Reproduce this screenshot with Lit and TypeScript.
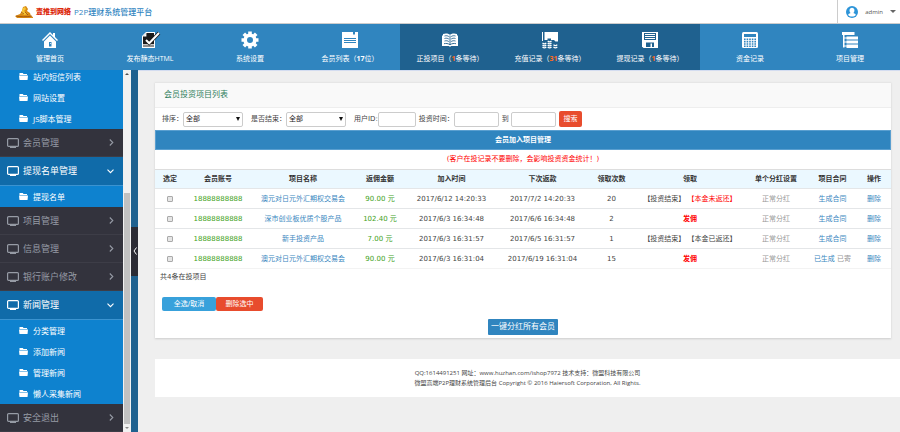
import { LitElement, html, css, svg, nothing } from "lit";
import { customElement, property } from "lit/decorators.js";
import { classMap } from "lit/directives/class-map.js";

const navIcons: Record<string, unknown> = {
  home: svg`<path fill="#fff" d="M8 0 11 3V1h2v4l3 3-1 1-7-7-7 7-1-1zM8 3.4l6 6V16H2V9.400z"/><path fill="#3085bf" d="M7 10h2.500v4.500H7z"/><path fill="#fff" d="M8 11h.8v1H8z"/>`,
  publish: svg`<path fill="#fff" d="M4 0h9v16H0V4z"/><path fill="#1b1b1b" d="M4.600 1H12v11H1V4.600z"/><path fill="#8f8f8f" d="M1 12.500h11V15H1z"/><path fill="#fff" d="M1 4.400 4.400 1v3.400z"/><path d="M4 8l3.200 3.200L17 1" fill="none" stroke="#1b1b1b" stroke-width="3.600"/><path d="M4 8l3.200 3.200L17 1" fill="none" stroke="#fff" stroke-width="2"/>`,
  gear: svg`<circle cx="8" cy="8" r="4.800" fill="none" stroke="#fff" stroke-width="3.600"/><path stroke="#fff" stroke-width="3.600" d="M8-.5v3M8 13.500v3M-.5 8h3M13.500 8h3M1.800 1.800l2 2M12.200 12.200l2 2M1.800 14.200l2-2M12.200 3.800l2-2"/>`,
  note: svg`<path fill="#fff" d="M0 0h11v2.500h2V0h3v16H0z"/><path stroke="#3085bf" d="M2 6.500h12M2 8.500h12M2 10.500h12"/>`,
  book: svg`<path fill="#fff" d="M1 2c3-1 5-.5 7 .8C10 1.500 12 1 15 2v1.500h1V14H9L8 15l-1-1H0V3.500h1z"/><path fill="none" stroke="#1f618f" stroke-width=".9" d="M8 3.500V13M2.500 4c1.500-.5 3-.3 4.300.5M2.500 6.500c1.500-.5 3-.3 4.300.5M2.500 9c1.500-.5 3-.3 4.300.5M13.500 4c-1.500-.5-3-.3-4.300.5M13.500 6.500c-1.500-.5-3-.3-4.300.5M13.500 9c-1.500-.5-3-.3-4.300.5M2 11.700c2-.5 4-.3 6 1 2-1.300 4-1.500 6-1"/>`,
  coins: svg`<path fill="#fff" d="M0 0h1v9H0zM2.500 0H16v9.500h-2.500L12 8H9V6.500H5.500V8H2.500z"/><g fill="none" stroke="#fff" stroke-width="1.200"><path d="M.5 11c1.200 1 2.600 1 3.800 0M.5 13c1.200 1 2.600 1 3.800 0M.5 15c1.200 1 2.600 1 3.800 0M5.700 9c1.200 1 2.600 1 3.800 0M5.700 11c1.200 1 2.600 1 3.800 0M5.700 13c1.200 1 2.600 1 3.800 0M5.700 15c1.200 1 2.600 1 3.800 0M11.500 12.800c1.200 1 2.600 1 3.800 0M11.500 15c1.200 1 2.600 1 3.800 0"/></g>`,
  disk: svg`<path fill="#fff" d="M0 0h16v16H1.500L0 14.500z"/><path fill="#1f618f" d="M2 1h12v7H2zM4 10.500h8V15H4z"/><path stroke="#fff" d="M3 2.500h10M3 4.500h10M3 6.500h10"/><path fill="#fff" d="M8.500 11.500H10V15H8.500z"/>`,
  calc: svg`<path fill="#fff" d="M1.500 0h13Q16 0 16 1.500v13q0 1.500-1.500 1.500h-13Q0 16 0 14.500v-13Q0 0 1.500 0z"/><path fill="#3085bf" d="M2 2h12v3H2z"/><path stroke="#3085bf" stroke-width="1.600" stroke-dasharray="1.600 1" d="M2 7.200h12.400M2 9.600h12.400M2 12h12.400M2 14.200h12.400"/>`,
  tree: svg`<path fill="#fff" d="M0 0h12.500v3H0zM1 3h1.500v12.500H1zM4.500 4.500H16v3H4.500zM4.500 8.500H16v3H4.500zM4.500 12.500H16v3.500H4.500z"/><path stroke="#fff" d="M2 6h3M2 10h3M2 14h3"/>`,
};

interface NavItem { icon: string; label: string; count?: string; tail?: string; dark?: boolean }
const navItems: NavItem[] = [
  { icon: "home", label: "管理首页" },
  { icon: "publish", label: "发布静态HTML" },
  { icon: "gear", label: "系统设置" },
  { icon: "note", label: "会员列表（", count: "17", tail: "位）" },
  { icon: "book", label: "正投项目（", count: "1", tail: "条等待）", dark: true },
  { icon: "coins", label: "充值记录（", count: "31", tail: "条等待）", dark: true },
  { icon: "disk", label: "提现记录（", count: "1", tail: "条等待）", dark: true },
  { icon: "calc", label: "资金记录" },
  { icon: "tree", label: "项目管理" },
];

interface Section { title?: string; children?: string[] }
const sections: Section[] = [
  { children: ["站内短信列表", "网站设置", "JS脚本管理"] },
  { title: "会员管理" },
  { title: "提现名单管理", children: ["提现名单"] },
  { title: "项目管理" },
  { title: "信息管理" },
  { title: "银行账户修改" },
  { title: "新闻管理", children: ["分类管理", "添加新闻", "管理新闻", "懒人采集新闻"] },
  { title: "安全退出" },
];

interface Row {
  account: string; project: string; amount: string; joined: string; next: string;
  times: number; done?: string; unpaid?: boolean; contract: string; sent?: string;
}
const rows: Row[] = [
  { account: "18888888888", project: "澳元对日元外汇期权交易会", amount: "90.00", joined: "2017/6/12 14:20:33", next: "2017/7/2 14:20:33", times: 20, done: "【本金未返还】", unpaid: true, contract: "生成合同" },
  { account: "18888888888", project: "深市创业板优质个股产品", amount: "102.40", joined: "2017/6/3 16:34:48", next: "2017/6/6 16:34:48", times: 2, contract: "生成合同" },
  { account: "18888888888", project: "新手投资产品", amount: "7.00", joined: "2017/6/3 16:31:57", next: "2017/6/5 16:31:57", times: 1, done: "【本金已返还】", contract: "生成合同" },
  { account: "18888888888", project: "澳元对日元外汇期权交易会", amount: "90.00", joined: "2017/6/3 16:31:04", next: "2017/6/19 16:31:04", times: 15, contract: "已生成", sent: "已寄" },
];

const columns: [string, number][] = [
  ["选定", 30], ["会员账号", 66], ["项目名称", 104], ["返佣金额", 50], ["加入时间", 93], ["下次返款", 89],
  ["领取次数", 49], ["领取", 108], ["单个分红设置", 64], ["项目合同", 49], ["操作", 34],
];
const totalWidth = columns.reduce((sum, [, w]) => sum + w, 0);

const base = css`
  * { box-sizing: border-box; }
  a { color: inherit; text-decoration: none; }
  svg { display: block; flex: none; }
  button, input, select { font: inherit; margin: 0; }
`;

@customElement("app-header")
class AppHeader extends LitElement {
  static styles = [base, css`
    :host { display: block; }
    .top { display: flex; justify-content: space-between; height: 24px; background: #fff; border-bottom: 1px solid #ccc; }
    .brand { display: flex; align-items: center; gap: 3px; padding-left: 15px; }
    .mark { color: #dc2a0d; font-weight: 900; font-size: 7px; }
    .name { color: #3085bf; font-size: 8px; font-weight: 500; }
    .user { display: flex; align-items: center; gap: 7px; padding: 0 4px 0 8px; border: 0; border-left: 1px solid #ccc; background: none; color: #555; font-size: 6px; }
    .nav { display: grid; grid-template-columns: repeat(9, 1fr); background: #3085bf; }
    .item { display: flex; flex-direction: column; align-items: center; gap: 6px; height: 46px; padding-top: 8px; color: #fff; font-size: 7px; line-height: 10px; white-space: nowrap; }
    .dark { background: #1f618f; }
    .dark .count { color: #ff6a1a; }
  `];
  render() {
    return html`
      <header class="top">
        <div class="brand">
          <svg width="18" height="12" viewBox="0 0 18 12"><path fill="#d98a12" d="M0 10l5-2 2-3 1-4 3-1 2 3-1 2 3 2 1 3 2 1v1H2z"/><path fill="#f6c637" d="M8 2l2-1 1 2-2 2 4 3-4 1-3-2z"/><path d="M1 10c5 1 10 1 16 0M6 6l3 2M10 6l3 3" stroke="#9b4d0b" stroke-width=".8" fill="none"/></svg>
          <strong class="mark">壹推到网络</strong>
          <span class="name">P2P理财系统管理平台</span>
        </div>
        <button class="user">
          <svg width="12" height="12" viewBox="0 0 12 12"><circle cx="6" cy="6" r="6" fill="#2c94d8"/><path fill="#fff" d="M6 1.800c3 0 3 4 1.300 5.200C9 7.500 9.600 8 9.800 9 8 11 4 11 2.200 9c.2-1 .8-1.500 2.500-2C3 5.800 3 1.800 6 1.800z"/></svg>
          admin
          <svg width="6" height="3" viewBox="0 0 6 3"><path d="M0 0h6L3 3z" fill="#666"/></svg>
        </button>
      </header>
      <nav class="nav">
        ${navItems.map((n) => html`
          <a href="#" class=${classMap({ item: true, dark: !!n.dark })}>
            <svg width="16" height="16" viewBox="0 0 16 16" overflow="visible">${navIcons[n.icon]}</svg>
            <span>${n.label}${n.count ? html`<b class="count">${n.count}</b>` : nothing}${n.tail ?? nothing}</span>
          </a>`)}
      </nav>`;
  }
}

@customElement("side-menu")
class SideMenu extends LitElement {
  static styles = [base, css`
    :host { display: flex; flex: none; min-height: 0; }
    .menu { display: flex; flex-direction: column; justify-content: flex-end; width: 123px; overflow: hidden; background: #0e82cf; }
    .head { display: flex; align-items: center; flex: none; gap: 4px; height: 28px; padding: 0 9px 0 7px; background: #33333d; border-bottom: 1px solid #3d3d47; color: #969ba5; font-size: 9px; }
    .open { height: 29px; background: #106ba9; border-bottom-color: #3b93d0; color: #fff; }
    .text { flex: 1; }
    .child { display: flex; align-items: center; flex: none; gap: 5px; height: 21px; padding-left: 19px; color: #fff; font-size: 8px; }
    .scroll { display: flex; flex-direction: column; align-items: center; width: 8px; padding: 3px 1px; background: #f1f1f1; }
    .thumb { width: 6px; height: 65%; margin-top: auto; margin-bottom: 3px; background: #c1c1c1; }
    .strip { display: flex; align-items: center; width: 7px; background: #1f618f; }
    .fold { display: flex; align-items: center; justify-content: flex-end; width: 7px; height: 49px; padding: 0 1px; border: 0; background: #2b2b34; }
  `];
  render() {
    return html`
      <nav class="menu">
        ${sections.map((s) => html`
          ${s.title ? html`
            <a href="#" class=${classMap({ head: true, open: !!s.children })}>
              <svg width="12" height="10" viewBox="0 0 12 10"><rect x=".6" y=".6" width="10.800" height="7.800" rx="1" fill="none" stroke="currentColor" stroke-width="1.200"/><path d="M3 9.400h6" stroke="currentColor" stroke-width="1.200"/></svg>
              <span class="text">${s.title}</span>
              ${s.children
                ? html`<svg width="7" height="5" viewBox="0 0 7 5"><path d="M.5.700 3.500 3.700 6.500.700" fill="none" stroke="currentColor" stroke-width="1.100"/></svg>`
                : html`<svg width="5" height="7" viewBox="0 0 5 7"><path d="M.8.500l3 3-3 3" fill="none" stroke="currentColor" stroke-width="1.100"/></svg>`}
            </a>` : nothing}
          ${(s.children ?? []).map((c) => html`
            <a href="#" class="child">
              <svg width="9" height="7" viewBox="0 0 9 7"><path fill="#fff" d="M.5 0h3.300l.7 1H8v1H.5z"/><path fill="#fff" d="M0 2.400h9L8.500 7H.5z"/></svg>
              ${c}
            </a>`)}`)}
      </nav>
      <div class="scroll">
        <svg width="4" height="2" viewBox="0 0 4 2"><path d="M0 2h4L2 0z" fill="#505050"/></svg>
        <div class="thumb"></div>
        <svg width="4" height="2" viewBox="0 0 4 2"><path d="M0 0h4L2 2z" fill="#888"/></svg>
      </div>
      <div class="strip">
        <button class="fold" aria-label="收起菜单">
          <svg width="4" height="8" viewBox="0 0 4 8"><path d="M3.500.500 1 4l2.500 3.500" fill="none" stroke="#fff"/></svg>
        </button>
      </div>`;
  }
}

@customElement("project-table")
class ProjectTable extends LitElement {
  @property({ attribute: false }) rows: Row[] = [];
  static styles = [base, css`
    :host { display: block; }
    table { width: 100%; table-layout: fixed; border-collapse: separate; border-spacing: 0; color: #444; }
    th, td { height: 20px; padding: 0; text-align: center; white-space: nowrap; line-height: 10px; border-bottom: 1px solid #e4e6e8; }
    th { background: #ebf8ff; color: #333; border-top: 1px solid #ddd; font-weight: 700; }
    caption { color: #f00; line-height: 19px; }
    tr:last-child td { border-bottom-color: #f3f3f3; }
    .box { display: block; width: 6px; height: 6px; margin: 0 auto; appearance: none; border: 1px solid #aaa; border-radius: 1px; background: #e6e6e6; }
    .green { color: #3f9f1c; }
    .blue { color: #3a87c0; }
    .grey { color: #999; }
    .red { color: #f00; }
  `];
  render() {
    return html`
      <table>
        <caption>(客户在投记录不要删除，会影响投资资金统计！)</caption>
        <colgroup>${columns.map(([, w]) => html`<col style="width:${(w / totalWidth) * 100}%">`)}</colgroup>
        <thead><tr>${columns.map(([name]) => html`<th scope="col">${name}</th>`)}</tr></thead>
        <tbody>
          ${this.rows.map((r) => html`
            <tr>
              <td><input class="box" type="checkbox" aria-label="选定 ${r.project}"></td>
              <td class="green">${r.account}</td>
              <td><a href="#" class="blue">${r.project}</a></td>
              <td class="green">${r.amount} 元</td>
              <td>${r.joined}</td>
              <td>${r.next}</td>
              <td>${r.times}</td>
              <td>${r.done
                ? html`【投资结束】 <span class=${classMap({ red: !!r.unpaid })}>${r.done}</span>`
                : html`<a href="#" class="red"><b>发佣</b></a>`}</td>
              <td class="grey">正常分红</td>
              <td><a href="#" class="blue">${r.contract}</a>${r.sent ? html` <span class="grey">${r.sent}</span>` : nothing}</td>
              <td><a href="#" class="blue">删除</a></td>
            </tr>`)}
        </tbody>
      </table>`;
  }
}

@customElement("app-root")
class AppRoot extends LitElement {
  static styles = [base, css`
    :host { display: flex; flex-direction: column; height: 100vh; overflow: hidden; background: #efefef; color: #444; font: 7px/10px "DejaVu Sans", "Noto Sans CJK SC", sans-serif; }
    app-header, side-menu { font-family: "Open Sans", "Noto Sans CJK SC", sans-serif; }
    app-header { flex: none; }
    .body { display: flex; flex: 1; min-height: 0; }
    .main { flex: 1; min-width: 0; padding: 11px 0 0 17px; border-top: 1px solid #d3dcf0; }
    .panel { margin-right: 9px; background: #fff; border-top: 1px solid #e6e6e6; box-shadow: 0 1px 2px #ccc; padding-bottom: 3px; }
    .title { margin: 0; padding: 0 9px; background: #f9f9f9; border-bottom: 1px solid #eee; color: #2e7d5b; font-size: 8px; font-weight: 400; line-height: 24px; }
    .filters { display: flex; align-items: center; height: 22px; padding: 0 7px; white-space: nowrap; }
    .pair { display: flex; align-items: center; margin-right: 8px; }
    .near { margin-right: 3px; }
    .pick { display: grid; grid-template-columns: 60px; align-items: center; }
    .pick select, .pick svg { grid-area: 1 / 1; }
    .pick svg { justify-self: end; margin-right: 3px; pointer-events: none; }
    select, .field { height: 15px; padding: 0 2px; border: 1px solid #ccc; border-radius: 2px; background: #fff; color: #222; }
    select { appearance: none; width: 100%; }
    .field { width: 45px; }
    .short { width: 38px; }
    .btn { border: 0; color: #fff; white-space: nowrap; padding: 0; border-radius: 2px; }
    .red { background: #e84c2d; }
    .sky { background: #38a1db; }
    .search { width: 23px; height: 16px; }
    .bar { margin: 0; background: #3085bf; border: 1px solid #5a9fd0; color: #fff; font-size: 7px; line-height: 18px; text-align: center; }
    .total { margin: 0; padding: 3px 5px; }
    .actions { display: flex; padding: 12px 7px 8px; }
    .act { height: 14px; width: 54px; }
    .narrow { width: 47px; }
    .pay { display: block; margin: 0 auto; height: 16px; padding: 0 3px; background: #3085bf; border-radius: 1px; font-size: 8px; }
    .foot { margin-top: 21px; padding: 9px 0; background: #fff; text-align: center; font-family: "Open Sans", "Noto Sans CJK SC", sans-serif; font-size: 6px; }
    .foot p { margin: 0; }
  `];
  private select(label: string, id: string) {
    return html`<div class="pair"><label for=${id}>${label}：</label><span class="pick">
      <select id=${id}><option>全部</option></select>
      <svg width="4" height="4" viewBox="0 0 4 4"><path d="M0 0h4L2 4z" fill="#111"/></svg></span></div>`;
  }
  render() {
    return html`
      <app-header></app-header>
      <div class="body">
        <side-menu></side-menu>
        <main class="main">
          <section class="panel">
            <h1 class="title">会员投资项目列表</h1>
            <form class="filters" @submit=${(e: Event) => e.preventDefault()}>
              ${this.select("排序", "order")}
              ${this.select("是否结束", "ended")}
              <div class="pair near"><label for="uid">用户ID:</label><input id="uid" class="field short"></div>
              <div class="pair near"><label for="from">投资时间：</label><input id="from" class="field"></div>
              <div class="pair near"><label for="to">到&nbsp;</label><input id="to" class="field"></div>
              <button class="btn red search">搜索</button>
            </form>
            <h2 class="bar">会员加入项目管理</h2>
            <project-table .rows=${rows}></project-table>
            <p class="total">共4条在投项目</p>
            <div class="actions">
              <button class="btn sky act">全选/取消</button>
              <button class="btn red act narrow">删除选中</button>
            </div>
            <button class="btn pay">一键分红所有会员</button>
          </section>
          <footer class="foot">
            <p>QQ:1614491251 网址：www.huzhan.com/ishop7972 技术支持：微盟科技有限公司</p>
            <p>微盟高端P2P理财系统管理后台 Copyright © 2016 Haiersoft Corporation, All Rights.</p>
          </footer>
        </main>
      </div>`;
  }
}
